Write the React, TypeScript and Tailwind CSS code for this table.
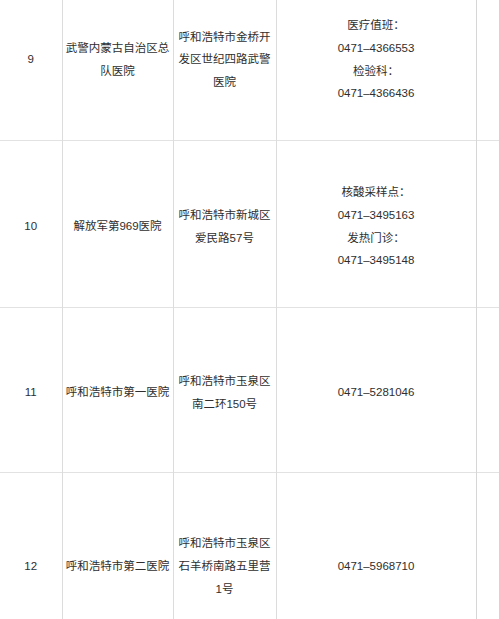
import React from "react";

interface Row {
  no: string;
  name: string[];
  addr: string[];
  phone: string[];
  h: string;
}

const rows: Row[] = [
  {
    no: "9",
    name: ["武警内蒙古自治区总", "队医院"],
    addr: ["呼和浩特市金桥开", "发区世纪四路武警", "医院"],
    phone: ["医疗值班：", "0471–4366553", "检验科：", "0471–4366436"],
    h: "h-[166px]",
  },
  {
    no: "10",
    name: ["解放军第969医院"],
    addr: ["呼和浩特市新城区", "爱民路57号"],
    phone: ["核酸采样点：", "0471–3495163", "发热门诊：", "0471–3495148"],
    h: "h-[167px]",
  },
  {
    no: "11",
    name: ["呼和浩特市第一医院"],
    addr: ["呼和浩特市玉泉区", "南二环150号"],
    phone: ["0471–5281046"],
    h: "h-[165px]",
  },
  {
    no: "12",
    name: ["呼和浩特市第二医院"],
    addr: ["呼和浩特市玉泉区", "石羊桥南路五里营", "1号"],
    phone: ["0471–5968710"],
    h: "h-[183px]",
  },
];

function Lines({ items }: { items: string[] }) {
  return (
    <>
      {items.map((t, i) => (
        <span key={i} className="block whitespace-nowrap">
          {t}
        </span>
      ))}
    </>
  );
}

export default function App() {
  return (
    <div
      className="w-[499px] h-[619px] overflow-hidden bg-white text-[#2e2e2e] text-[11.5px] leading-[22.7px]"
      style={{ fontFamily: '"Liberation Sans", "Noto Sans CJK SC", sans-serif' }}
    >
      <table className="mt-[-26px] w-[520px] border-collapse table-fixed">
        <colgroup>
          <col className="w-[62px]" />
          <col className="w-[111px]" />
          <col className="w-[103px]" />
          <col className="w-[200px]" />
          <col className="w-[44px]" />
        </colgroup>
        <tbody>
          {rows.map((r) => (
            <tr key={r.no} className={`${r.h} border-b border-[#e2e2e2]`}>
              <td className="border-r border-[#dcdcdc] pt-[6px] text-center align-middle">{r.no}</td>
              <td className="border-r border-[#dcdcdc] pt-[6px] text-center align-middle">
                <Lines items={r.name} />
              </td>
              <td className="border-r border-[#dcdcdc] pt-[6px] text-center align-middle">
                <Lines items={r.addr} />
              </td>
              <td className="border-r border-[#d6d6d6] pt-[6px] text-center align-middle">
                <Lines items={r.phone} />
              </td>
              <td></td>
            </tr>
          ))}
        </tbody>
      </table>
    </div>
  );
}
